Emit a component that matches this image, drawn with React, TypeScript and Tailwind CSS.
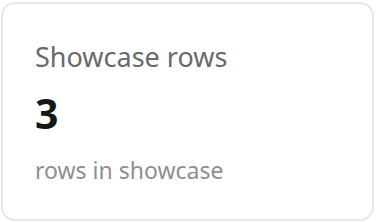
export default function App() {
  return (
    <div className="w-[376px] h-[222px] bg-white pl-[1px] pr-[2px] pt-[2px] pb-[1px]" style={{ fontFamily: '"Noto Sans", "Open Sans", sans-serif' }}>
      <div className="h-full rounded-[14px] border-2 border-[#e8e8e8] bg-white px-[32px] pt-[33px]">
        <div className="text-[27px] leading-[40px] text-[#6a6a6a]">Showcase rows</div>
        <div className="mt-[14px] text-[41px] leading-[44px] font-bold text-[#161616]">3</div>
        <div className="mt-[18px] text-[23px] leading-[34px] text-[#8f8f8f]">rows in showcase</div>
      </div>
    </div>
  )
}
